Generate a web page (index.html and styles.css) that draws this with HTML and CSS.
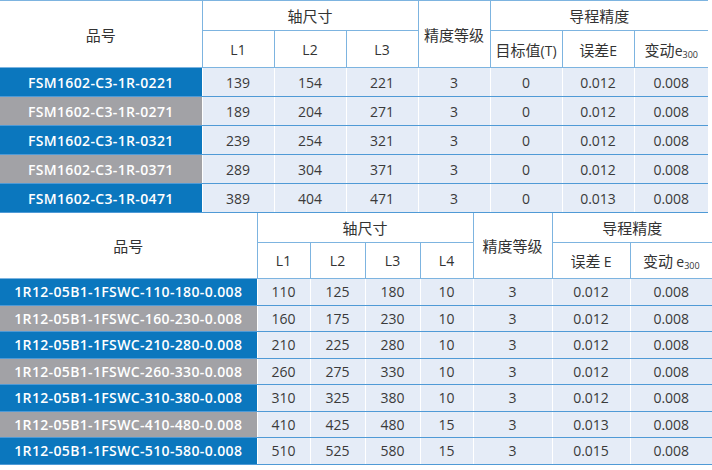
FILE: index.html
```html
<!DOCTYPE html>
<html lang="zh">
<head>
<meta charset="utf-8">
<link rel="stylesheet" href="styles.css">
</head>
<body>
<table class="spec t1">
  <colgroup>
    <col class="c-code1"><col class="c72"><col class="c72"><col class="c72"><col class="c72"><col class="c72"><col class="c72"><col class="c73">
  </colgroup>
  <thead>
    <tr class="h1">
      <th rowspan="2" class="hcode">品号</th>
      <th colspan="3">轴尺寸</th>
      <th rowspan="2">精度等级</th>
      <th colspan="3">导程精度</th>
    </tr>
    <tr class="h2">
      <th class="lat">L1</th><th class="lat">L2</th><th class="lat">L3</th>
      <th>目标值<span class="lat">(T)</span></th><th>误差<span class="lat">E</span></th><th>变动<span class="lat">e<sub>300</sub></span></th>
    </tr>
  </thead>
  <tbody>
    <tr class="b"><td class="code">FSM1602-C3-1R-0221</td><td>139</td><td>154</td><td>221</td><td>3</td><td>0</td><td>0.012</td><td>0.008</td></tr>
    <tr class="g"><td class="code">FSM1602-C3-1R-0271</td><td>189</td><td>204</td><td>271</td><td>3</td><td>0</td><td>0.012</td><td>0.008</td></tr>
    <tr class="b"><td class="code">FSM1602-C3-1R-0321</td><td>239</td><td>254</td><td>321</td><td>3</td><td>0</td><td>0.012</td><td>0.008</td></tr>
    <tr class="g"><td class="code">FSM1602-C3-1R-0371</td><td>289</td><td>304</td><td>371</td><td>3</td><td>0</td><td>0.012</td><td>0.008</td></tr>
    <tr class="b"><td class="code">FSM1602-C3-1R-0471</td><td>389</td><td>404</td><td>471</td><td>3</td><td>0</td><td>0.013</td><td>0.008</td></tr>
  </tbody>
</table>
<table class="spec t2">
  <colgroup>
    <col class="c-code2"><col class="c53"><col class="c55"><col class="c55"><col class="c53"><col class="c79"><col class="c78"><col class="c82">
  </colgroup>
  <thead>
    <tr class="h1">
      <th rowspan="2" class="hcode">品号</th>
      <th colspan="4">轴尺寸</th>
      <th rowspan="2">精度等级</th>
      <th colspan="2">导程精度</th>
    </tr>
    <tr class="h2">
      <th class="lat">L1</th><th class="lat">L2</th><th class="lat">L3</th><th class="lat">L4</th>
      <th>误差 <span class="lat">E</span></th><th>变动 <span class="lat">e<sub>300</sub></span></th>
    </tr>
  </thead>
  <tbody>
    <tr class="b"><td class="code">1R12-05B1-1FSWC-110-180-0.008</td><td>110</td><td>125</td><td>180</td><td>10</td><td>3</td><td>0.012</td><td>0.008</td></tr>
    <tr class="g"><td class="code">1R12-05B1-1FSWC-160-230-0.008</td><td>160</td><td>175</td><td>230</td><td>10</td><td>3</td><td>0.012</td><td>0.008</td></tr>
    <tr class="b"><td class="code">1R12-05B1-1FSWC-210-280-0.008</td><td>210</td><td>225</td><td>280</td><td>10</td><td>3</td><td>0.012</td><td>0.008</td></tr>
    <tr class="g"><td class="code">1R12-05B1-1FSWC-260-330-0.008</td><td>260</td><td>275</td><td>330</td><td>10</td><td>3</td><td>0.012</td><td>0.008</td></tr>
    <tr class="b"><td class="code">1R12-05B1-1FSWC-310-380-0.008</td><td>310</td><td>325</td><td>380</td><td>10</td><td>3</td><td>0.012</td><td>0.008</td></tr>
    <tr class="g"><td class="code">1R12-05B1-1FSWC-410-480-0.008</td><td>410</td><td>425</td><td>480</td><td>15</td><td>3</td><td>0.013</td><td>0.008</td></tr>
    <tr class="b"><td class="code">1R12-05B1-1FSWC-510-580-0.008</td><td>510</td><td>525</td><td>580</td><td>15</td><td>3</td><td>0.015</td><td>0.008</td></tr>
  </tbody>
</table>
</body>
</html>
```
FILE: styles.css
```css
html, body {
  margin: 0;
  padding: 0;
  background: #ffffff;
}
body {
  font-family: "Open Sans", "Noto Sans CJK SC", sans-serif;
  color: #3a3a3a;
}
.spec {
  border-collapse: collapse;
  table-layout: fixed;
  border-spacing: 0;
}
.t1 { width: 708px; }
.t2 { width: 712px; }

.c-code1 { width: 202px; }
.c72 { width: 72px; }
.c73 { width: 74px; }
.c-code2 { width: 257px; }
.c53 { width: 53px; }
.c55 { width: 55px; }
.c79 { width: 79px; }
.c78 { width: 78px; }
.c82 { width: 82px; }

.spec th {
  font-family: "Noto Sans CJK SC", sans-serif;
  font-weight: 400;
  font-size: 15px;
  color: #333333;
  background: #ffffff;
  border: 1.5px solid #7db4e0;
  padding: 0;
  text-align: center;
  vertical-align: middle;
  white-space: nowrap;
}
.spec th:first-child { border-left: none; }
.spec tr th:last-child { border-right: none; }
.t2 .h1 th { border-top: none; }
.spec .h2 th:first-child { border-left: 1.5px solid #7db4e0; }
.spec .lat {
  font-family: "Open Sans", sans-serif;
  font-size: 14px;
}
.spec sub {
  font-size: 9px;
  vertical-align: -2px;
  line-height: 0;
}
.t1 .h1 th { height: 29px; }
.t1 .h2 th { height: 36px; }
.t2 .h1 th { height: 29px; }
.t2 .h2 th { height: 35px; }

.spec td {
  font-size: 14px;
  text-align: center;
  vertical-align: middle;
  padding: 0;
  background: #e5ecf7;
  color: #3a3a3a;
  border-bottom: 1.5px solid #4f9ad6;
  border-left: 1px solid #ffffff;
  white-space: nowrap;
}
.t1 td { height: 28px; }
.t2 td { height: 25.5px; }
.spec td.code {
  font-size: 14px;
  font-weight: 600;
  color: #ffffff;
  border-left: none;
  letter-spacing: 0.35px;
}
.spec tr.b td.code { background: #0b77be; }
.spec tr.g td.code { background: #a2a2a6; }
```
